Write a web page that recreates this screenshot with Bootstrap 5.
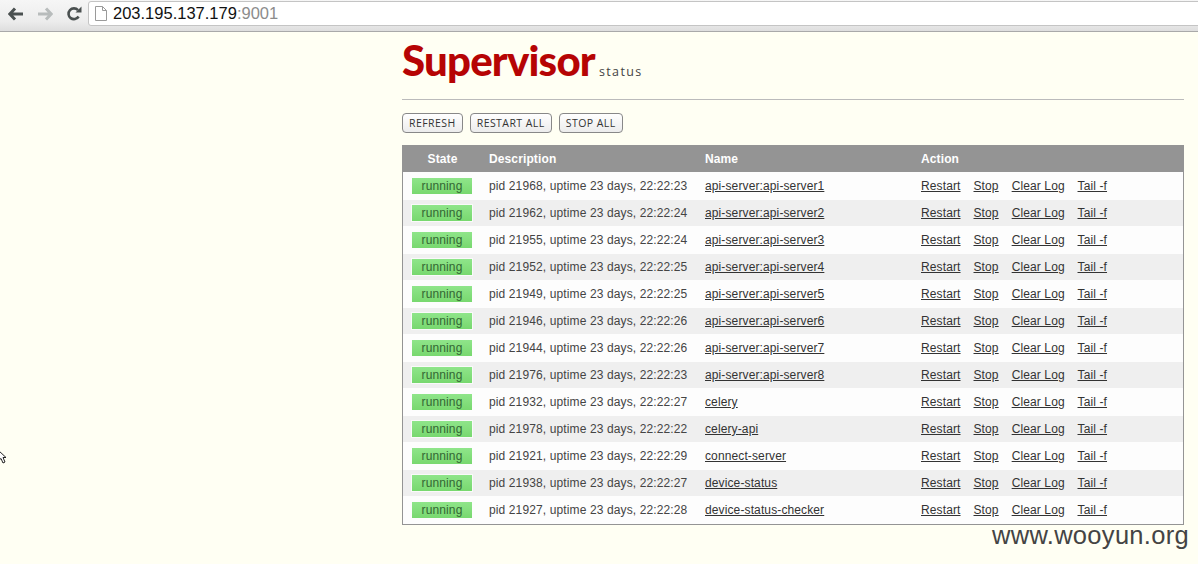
<!DOCTYPE html>
<html lang="en">
<head>
    <meta charset="UTF-8">
    <title>Supervisor Status</title>
    <link href="https://cdn.jsdelivr.net/npm/bootstrap@5.3.3/dist/css/bootstrap.min.css" rel="stylesheet">
    <style>
        html, body { height: 564px; overflow: hidden; }
        body { background: #fffff3; font-family: "Liberation Sans", Arial, sans-serif; font-size: 12px; color: #444; position: relative; }
        .chrome-bar { height: 32px; background: linear-gradient(#f6f6f6, #ececec 70%, #dedede); border-bottom: 1px solid #a9a9a9; padding-left: 1px; padding-top: 1px; }
        .chrome-btn { width: 29px; height: 25px; }
        .omnibox { height: 25px; width: 1200px; background: #fff; border: 1px solid #c4c4c4; border-radius: 3px 0 0 3px; padding-left: 6px; font-size: 16.5px; color: #111; }
        .omnibox .port { color: #8c8c8c; }
        .omni-icon { margin-right: 6px; }
        .page-col { width: 782px; margin-left: 402px; }
        .logo-area { height: 68px; border-bottom: 1px solid #bbb; padding-bottom: 18px; }
        .logo-word { font-family: Lato, "Open Sans", sans-serif; font-weight: 900; font-size: 42px; line-height: 42px; letter-spacing: -.8px; color: #b60404; }
        .logo-sub { font-family: "Open Sans", sans-serif; font-size: 12.5px; letter-spacing: 1.4px; line-height: 16px; color: #444; margin-left: 4px; margin-bottom: 1px; }
        .btn-row { padding-top: 13px; padding-bottom: 12px; gap: 7.2px; }
        .sup-btn { height: 20px; padding: 0 6px; border: 1px solid #888; border-radius: 4px; background: linear-gradient(#fff, #ececec); font-family: "Open Sans", sans-serif; font-size: 10.5px; font-weight: 500; letter-spacing: .43px; line-height: 18px; color: #333; }
        .sup-table { width: 782px; border: 1px solid #949494; border-top: 0; margin: 0; table-layout: fixed; border-collapse: separate; border-spacing: 0; letter-spacing: .12px; }
        .sup-table th { height: 27px; padding: 0 0 0 7px; background: #949494; color: #fff; font-weight: 700; font-size: 12px; border: 0; }
        .sup-table td { height: 28px; padding: 0 0 0 7px; border: 0; color: #444; font-size: 12px; vertical-align: middle; background: #fdfdfd; }
        .sup-table tr.alt td { height: 26px; background: #efefef; }
        .sup-table a { color: #333; text-decoration: underline; margin-right: 9.500px; }
        .sup-table td.name-cell a { margin: 0; }
        .sup-table th.state-head { text-align: center; padding-left: 0; }
        .sup-table td.state-cell { padding-left: 9px; }
        .state-pill { width: 60px; height: 16px; background: linear-gradient(#8fe58a, #78d86f); color: #336633; text-align: center; line-height: 16px; }
        tr.alt .state-pill { outline: 1px solid #fafafa; }
        .watermark { position: absolute; right: 9px; top: 518px; font-size: 25.5px; line-height: 34px; color: #444; letter-spacing: 0.3px; }
        .cursor-mark { position: absolute; left: -3px; top: 449px; }
    </style>
</head>
<body>

    <!-- Browser toolbar -->
    <div class="chrome-bar d-flex align-items-start overflow-hidden">
        <div class="chrome-btn flex-shrink-0 d-flex align-items-center justify-content-center">
            <svg width="16" height="14" viewBox="0 0 16 14"><path d="M7 1.500 1.800 7 7 12.500M2 7h13" fill="none" stroke="#4a5050" stroke-width="3"/></svg>
        </div>
        <div class="chrome-btn flex-shrink-0 d-flex align-items-center justify-content-center">
            <svg width="16" height="14" viewBox="0 0 16 14"><path d="M9 1.500 14.200 7 9 12.500M14 7H1" fill="none" stroke="#b8bcbc" stroke-width="3"/></svg>
        </div>
        <div class="chrome-btn flex-shrink-0 d-flex align-items-center justify-content-center">
            <svg width="16" height="16" viewBox="0 0 16 16"><path d="M12.600 10.500A5.400 5.400 0 1 1 12 4.200" fill="none" stroke="#4a5050" stroke-width="2.600"/><path d="M9.500 6.500h6v-6z" fill="#4a5050"/></svg>
        </div>
        <div class="omnibox d-flex align-items-center flex-shrink-0">
            <svg class="omni-icon" width="12" height="15" viewBox="0 0 12 15"><path d="M.5.5h7l4 4v10H.5zM7.500.5v4h4" fill="#fff" stroke="#9a9a9a"/></svg>
            <span>203.195.137.179<span class="port">:9001</span></span>
        </div>
    </div>

    <div class="page-col">
        <!-- Logo -->
        <div class="logo-area d-flex align-items-end">
            <span class="logo-word">Supervisor</span>
            <span class="logo-sub">status</span>
        </div>

        <!-- Buttons -->
        <div class="btn-row d-flex">
            <div class="sup-btn">REFRESH</div>
            <div class="sup-btn">RESTART ALL</div>
            <div class="sup-btn">STOP ALL</div>
        </div>

        <!-- Process table, rows filled in below -->
        <table class="sup-table">
            <colgroup>
                <col style="width: 79px"><col style="width: 216px"><col style="width: 216px"><col>
            </colgroup>
            <thead>
                <tr><th class="state-head">State</th><th>Description</th><th>Name</th><th>Action</th></tr>
            </thead>
            <tbody id="procRows"></tbody>
        </table>
    </div>

    <svg class="cursor-mark" width="9" height="16" viewBox="0 0 9 16"><path d="M1 1v11l3-2.500 2 4.500 2-1-2-4.500h3z" fill="#fff" stroke="#222"/></svg>
    <div class="watermark">www.wooyun.org</div>

    <script src="https://cdn.jsdelivr.net/npm/bootstrap@5.3.3/dist/js/bootstrap.bundle.min.js"></script>
    <script>
        const procs = [
            ["21968", "22:22:23", "api-server:api-server1"],
            ["21962", "22:22:24", "api-server:api-server2"],
            ["21955", "22:22:24", "api-server:api-server3"],
            ["21952", "22:22:25", "api-server:api-server4"],
            ["21949", "22:22:25", "api-server:api-server5"],
            ["21946", "22:22:26", "api-server:api-server6"],
            ["21944", "22:22:26", "api-server:api-server7"],
            ["21976", "22:22:23", "api-server:api-server8"],
            ["21932", "22:22:27", "celery"],
            ["21978", "22:22:22", "celery-api"],
            ["21921", "22:22:29", "connect-server"],
            ["21938", "22:22:27", "device-status"],
            ["21927", "22:22:28", "device-status-checker"]
        ];

        document.getElementById("procRows").innerHTML = procs.map((p, i) => `
            <tr class="${i % 2 ? "alt" : ""}">
                <td class="state-cell"><div class="state-pill">running</div></td>
                <td>pid ${p[0]}, uptime 23 days, ${p[1]}</td>
                <td class="name-cell"><a href="#">${p[2]}</a></td>
                <td><a href="#">Restart</a> <a href="#">Stop</a> <a href="#">Clear Log</a> <a href="#">Tail -f</a></td>
            </tr>`).join("");
    </script>
</body>
</html>
